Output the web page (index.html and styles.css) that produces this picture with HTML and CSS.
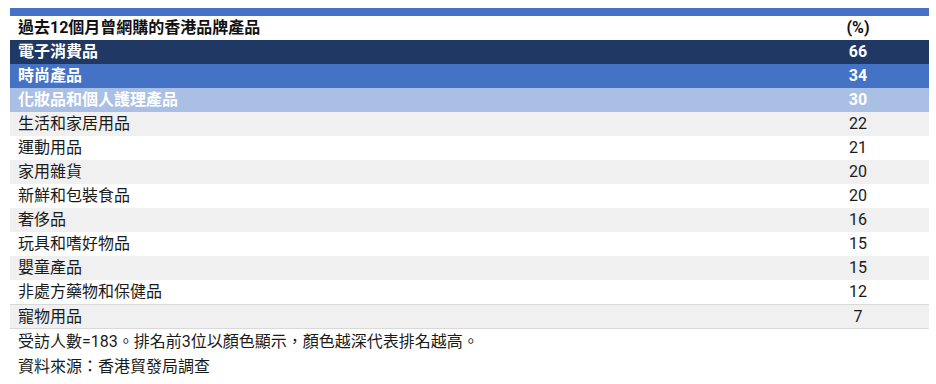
FILE: index.html
```html
<!DOCTYPE html>
<html lang="zh-Hant">
<head>
<meta charset="utf-8">
<link rel="stylesheet" href="styles.css">
</head>
<body>
<div class="wrap">
  <div class="topbar"></div>
  <table class="tbl">
    <thead>
      <tr class="head"><th class="lbl">過去12個月曾網購的香港品牌產品</th><th class="val">(%)</th></tr>
    </thead>
    <tbody>
      <tr class="r1"><td class="lbl">電子消費品</td><td class="val">66</td></tr>
      <tr class="r2"><td class="lbl">時尚產品</td><td class="val">34</td></tr>
      <tr class="r3"><td class="lbl">化妝品和個人護理產品</td><td class="val">30</td></tr>
      <tr class="even"><td class="lbl">生活和家居用品</td><td class="val">22</td></tr>
      <tr><td class="lbl">運動用品</td><td class="val">21</td></tr>
      <tr class="even"><td class="lbl">家用雜貨</td><td class="val">20</td></tr>
      <tr><td class="lbl">新鮮和包裝食品</td><td class="val">20</td></tr>
      <tr class="even"><td class="lbl">奢侈品</td><td class="val">16</td></tr>
      <tr><td class="lbl">玩具和嗜好物品</td><td class="val">15</td></tr>
      <tr class="even"><td class="lbl">嬰童產品</td><td class="val">15</td></tr>
      <tr><td class="lbl">非處方藥物和保健品</td><td class="val">12</td></tr>
      <tr class="even last"><td class="lbl">寵物用品</td><td class="val">7</td></tr>
    </tbody>
  </table>
  <div class="notes">
    <p>受訪人數=183。排名前3位以顏色顯示，顏色越深代表排名越高。</p>
    <p>資料來源：香港貿發局調查</p>
  </div>
</div>
</body>
</html>
```

FILE: styles.css
```css
html, body {
  margin: 0;
  padding: 0;
  background: #ffffff;
}
body {
  font-family: Roboto, "Noto Sans CJK TC", "Noto Sans", sans-serif;
  font-size: 16px;
  color: #1a1a1a;
}
.wrap {
  padding: 8px 7px 0 10px;
}
.topbar {
  height: 8px;
  background: #4472c4;
}
.tbl {
  width: 100%;
  border-collapse: collapse;
  table-layout: fixed;
}
.tbl th, .tbl td {
  height: 24px;
  padding: 0 8px;
  line-height: 24px;
  white-space: nowrap;
}
.tbl .lbl {
  text-align: left;
}
.tbl .val {
  width: 126px;
  text-align: center;
}
.head th {
  font-weight: 700;
  color: #111111;
  background: #ffffff;
}
.r1 td, .r2 td, .r3 td {
  color: #ffffff;
  font-weight: 700;
}
.r1 td { background: #203864; }
.r2 td { background: #4472c4; }
.r3 td { background: #a9bfe4; }
.even td { background: #f0f0f0; }
.last td {
  border-top: 1px solid #d9d9d9;
  border-bottom: 1px solid #d9d9d9;
  height: 23px;
  line-height: 23px;
}
.notes {
  padding: 0 8px;
}
.notes p {
  margin: 0;
  line-height: 25px;
  color: #1a1a1a;
}
```
